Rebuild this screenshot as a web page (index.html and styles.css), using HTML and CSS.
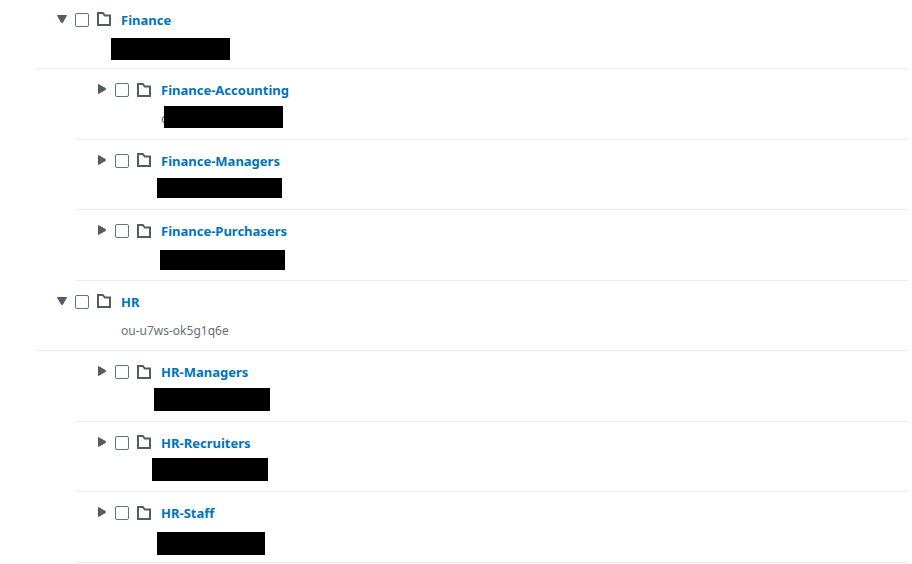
FILE: index.html
```html
<!DOCTYPE html>
<html lang="en">
<head>
<meta charset="utf-8">
<title>Organizational units</title>
<link rel="stylesheet" href="styles.css">
</head>
<body>
<svg class="defs" aria-hidden="true">
  <symbol id="folder" viewBox="0 0 14 14"><path d="M1 13V1h4.800l2 2.500H13V13z" fill="none" stroke="#545b64" stroke-width="2"/></symbol>
  <symbol id="down" viewBox="0 0 10 10"><path d="M.5 1.500h9L5.500 8.500h-1z" fill="#545b64" stroke="#545b64" stroke-width="1" stroke-linejoin="round"/></symbol>
  <symbol id="right" viewBox="0 0 10 10"><path d="M1.500.5v9L8.500 5.500v-1z" fill="#545b64" stroke="#545b64" stroke-width="1" stroke-linejoin="round"/></symbol>
</svg>
<ul class="tree">
  <li>
    <div class="row short first">
      <div class="head"><button class="toggle" aria-label="Collapse Finance" aria-expanded="true"><svg><use href="#down"/></svg></button><input type="checkbox" aria-labelledby="finance"><svg class="folder"><use href="#folder"/></svg><a id="finance" href="#">Finance</a></div>
      <p class="unit-id"></p><span class="redact r-finance"></span>
    </div>
    <ul>
      <li class="row">
        <div class="head"><button class="toggle" aria-label="Expand Finance-Accounting" aria-expanded="false"><svg><use href="#right"/></svg></button><input type="checkbox" aria-labelledby="accounting"><svg class="folder"><use href="#folder"/></svg><a id="accounting" href="#">Finance-Accounting</a></div>
        <p class="unit-id">o</p><span class="redact r-accounting"></span>
      </li>
      <li class="row short">
        <div class="head"><button class="toggle" aria-label="Expand Finance-Managers" aria-expanded="false"><svg><use href="#right"/></svg></button><input type="checkbox" aria-labelledby="fmanagers"><svg class="folder"><use href="#folder"/></svg><a id="fmanagers" href="#">Finance-Managers</a></div>
        <p class="unit-id"></p><span class="redact r-fmanagers"></span>
      </li>
      <li class="row">
        <div class="head"><button class="toggle" aria-label="Expand Finance-Purchasers" aria-expanded="false"><svg><use href="#right"/></svg></button><input type="checkbox" aria-labelledby="purchasers"><svg class="folder"><use href="#folder"/></svg><a id="purchasers" href="#">Finance-Purchasers</a></div>
        <p class="unit-id"></p><span class="redact r-purchasers"></span>
      </li>
    </ul>
  </li>
  <li>
    <div class="row short">
      <div class="head"><button class="toggle" aria-label="Collapse HR" aria-expanded="true"><svg><use href="#down"/></svg></button><input type="checkbox" aria-labelledby="hr"><svg class="folder"><use href="#folder"/></svg><a id="hr" href="#">HR</a></div>
      <p class="unit-id">ou-u7ws-ok5g1q6e</p>
    </div>
    <ul>
      <li class="row">
        <div class="head"><button class="toggle" aria-label="Expand HR-Managers" aria-expanded="false"><svg><use href="#right"/></svg></button><input type="checkbox" aria-labelledby="hmanagers"><svg class="folder"><use href="#folder"/></svg><a id="hmanagers" href="#">HR-Managers</a></div>
        <p class="unit-id"></p><span class="redact r-hmanagers"></span>
      </li>
      <li class="row short">
        <div class="head"><button class="toggle" aria-label="Expand HR-Recruiters" aria-expanded="false"><svg><use href="#right"/></svg></button><input type="checkbox" aria-labelledby="recruiters"><svg class="folder"><use href="#folder"/></svg><a id="recruiters" href="#">HR-Recruiters</a></div>
        <p class="unit-id"></p><span class="redact r-recruiters"></span>
      </li>
      <li class="row">
        <div class="head"><button class="toggle" aria-label="Expand HR-Staff" aria-expanded="false"><svg><use href="#right"/></svg></button><input type="checkbox" aria-labelledby="staff"><svg class="folder"><use href="#folder"/></svg><a id="staff" href="#">HR-Staff</a></div>
        <p class="unit-id"></p><span class="redact r-staff"></span>
      </li>
    </ul>
  </li>
</ul>
</body>
</html>
```
FILE: styles.css
```css
* { box-sizing: border-box; }

body {
  margin: 0;
  background: #fff;
  font-family: "Noto Sans", "Open Sans", sans-serif;
}

.defs { display: none; }

ul {
  list-style: none;
  margin: 0;
  padding: 0;
}

.tree { padding: 0 4px 0 36px; }
.tree ul { padding-left: 40px; }

.row {
  position: relative;
  padding: 10px 0 10px 19px;
  border-bottom: 1px solid #eaeded;
}

.row.short { padding-bottom: 9px; }
.row.first { padding-top: 9px; }

.head {
  display: flex;
  align-items: center;
  height: 22px;
}

.toggle {
  display: flex;
  align-items: center;
  justify-content: center;
  width: 14px;
  height: 14px;
  margin: 0 6px 2px 0;
  padding: 0;
  border: 0;
  background: none;
}

.toggle svg {
  width: 10px;
  height: 10px;
}

input {
  appearance: none;
  width: 14px;
  height: 14px;
  margin: 0 8px 0 0;
  border: 1px solid #687078;
  border-radius: 2px;
  background: #fff;
}

.folder {
  width: 14px;
  height: 14px;
  margin-right: 10px;
}

.short .folder { margin-bottom: 2px; }

a {
  color: #0073bb;
  font-size: 13px;
  line-height: 22px;
  font-weight: 700;
  text-decoration: none;
}

.unit-id {
  height: 20px;
  margin: 8px 0 0;
  padding-left: 66px;
  color: #687078;
  font-size: 12px;
  line-height: 20px;
}

/* Bars that cover the unit ids */
.redact {
  position: absolute;
  background: #000;
}

.r-finance { left: 75px; top: 38px; width: 119px; height: 22px; }
.r-accounting { left: 88px; top: 37px; width: 119px; height: 22px; }
.r-fmanagers { left: 81px; top: 38px; width: 125px; height: 20px; }
.r-purchasers { left: 84px; top: 40px; width: 125px; height: 20px; }
.r-hmanagers { left: 78px; top: 37px; width: 116px; height: 23px; }
.r-recruiters { left: 76px; top: 36px; width: 116px; height: 23px; }
.r-staff { left: 81px; top: 40px; width: 108px; height: 23px; }
```
